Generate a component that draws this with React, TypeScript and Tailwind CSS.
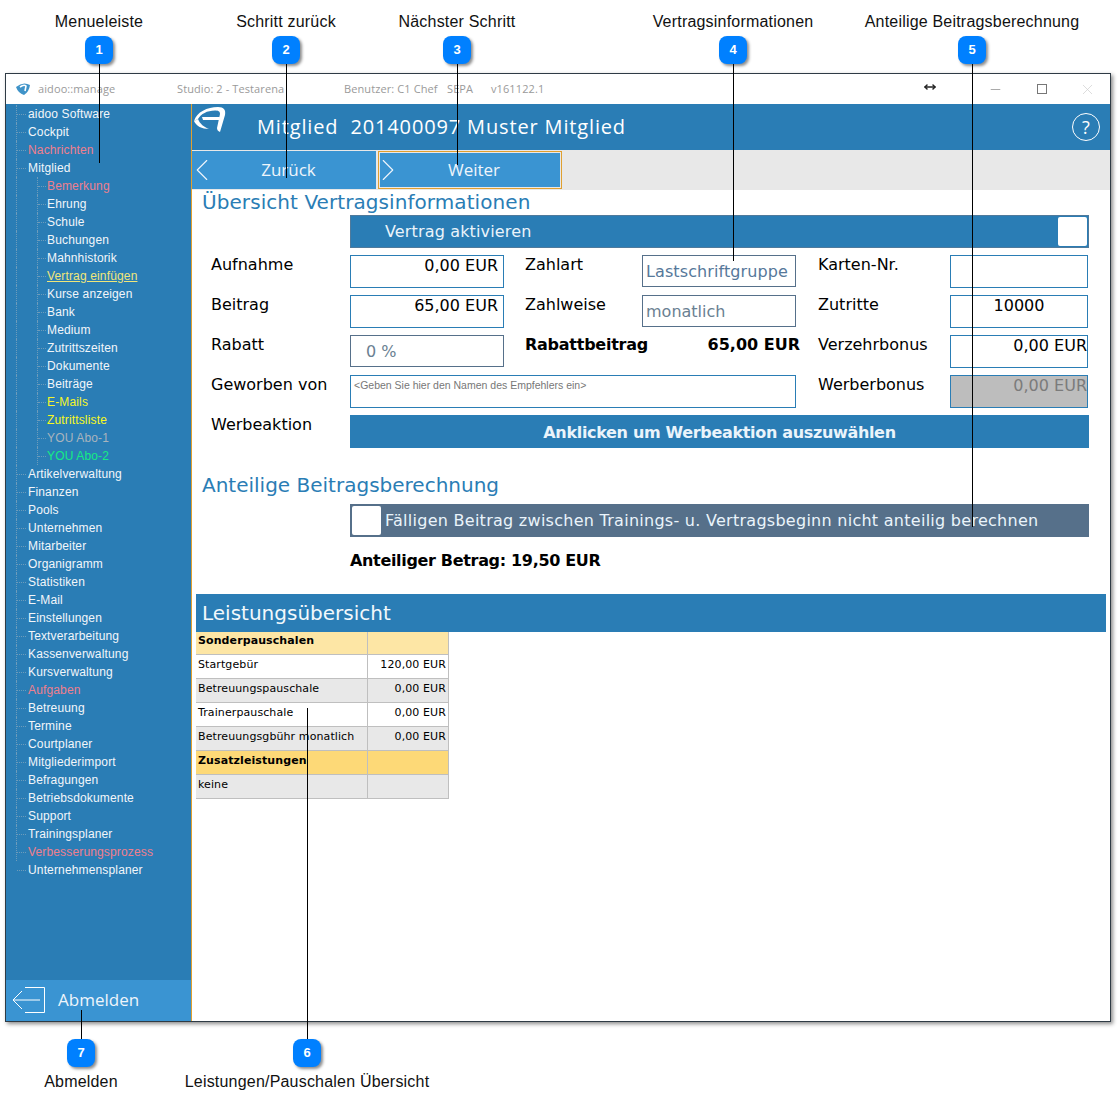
import React from 'react';
import { ChevronLeft, ChevronRight, Minus, X, MoveHorizontal } from 'lucide-react';
import { twMerge } from 'tailwind-merge';

const navItems: { label: string; sub?: boolean; color?: string; underline?: boolean }[] = [
  { label: 'aidoo Software' },
  { label: 'Cockpit' },
  { label: 'Nachrichten', color: 'text-[#ee7f8e]' },
  { label: 'Mitglied' },
  { label: 'Bemerkung', sub: true, color: 'text-[#ee7f8e]' },
  { label: 'Ehrung', sub: true },
  { label: 'Schule', sub: true },
  { label: 'Buchungen', sub: true },
  { label: 'Mahnhistorik', sub: true },
  { label: 'Vertrag einfügen', sub: true, color: 'text-[#f0e67a]', underline: true },
  { label: 'Kurse anzeigen', sub: true },
  { label: 'Bank', sub: true },
  { label: 'Medium', sub: true },
  { label: 'Zutrittszeiten', sub: true },
  { label: 'Dokumente', sub: true },
  { label: 'Beiträge', sub: true },
  { label: 'E-Mails', sub: true, color: 'text-[#f5f52a]' },
  { label: 'Zutrittsliste', sub: true, color: 'text-[#f8f820]' },
  { label: 'YOU Abo-1', sub: true, color: 'text-[#a9b4bd]' },
  { label: 'YOU Abo-2', sub: true, color: 'text-[#14ec84]' },
  { label: 'Artikelverwaltung' },
  { label: 'Finanzen' },
  { label: 'Pools' },
  { label: 'Unternehmen' },
  { label: 'Mitarbeiter' },
  { label: 'Organigramm' },
  { label: 'Statistiken' },
  { label: 'E-Mail' },
  { label: 'Einstellungen' },
  { label: 'Textverarbeitung' },
  { label: 'Kassenverwaltung' },
  { label: 'Kursverwaltung' },
  { label: 'Aufgaben', color: 'text-[#ee7f8e]' },
  { label: 'Betreuung' },
  { label: 'Termine' },
  { label: 'Courtplaner' },
  { label: 'Mitgliederimport' },
  { label: 'Befragungen' },
  { label: 'Betriebsdokumente' },
  { label: 'Support' },
  { label: 'Trainingsplaner' },
  { label: 'Verbesserungsprozess', color: 'text-[#ee7f8e]' },
  { label: 'Unternehmensplaner' },
];

// annotation callouts that sit over the screenshot
const callouts = [
  { n: 1, x: 99, label: 'Menueleiste', lineH: 99 },
  { n: 2, x: 286, label: 'Schritt zurück', lineH: 114 },
  { n: 3, x: 457, label: 'Nächster Schritt', lineH: 101 },
  { n: 4, x: 733, label: 'Vertragsinformationen', lineH: 197 },
  { n: 5, x: 972, label: 'Anteilige Beitragsberechnung', lineH: 463 },
];

const rows = [
  { label: 'Sonderpauschalen', value: '', kind: 'head1' },
  { label: 'Startgebür', value: '120,00 EUR', kind: 'white' },
  { label: 'Betreuungspauschale', value: '0,00 EUR', kind: 'gray' },
  { label: 'Trainerpauschale', value: '0,00 EUR', kind: 'white' },
  { label: 'Betreuungsgbühr monatlich', value: '0,00 EUR', kind: 'gray' },
  { label: 'Zusatzleistungen', value: '', kind: 'head2' },
  { label: 'keine', value: '', kind: 'gray' },
];

function Badge({ n }: { n: number }) {
  return (
    <div className="flex h-[28px] w-[28px] items-center justify-center rounded-[8px] bg-[#0080ff] text-[13px] font-bold text-white shadow-[2px_2px_3px_rgba(0,0,0,0.45)]">
      {n}
    </div>
  );
}

function Field({ children, className = '' }: { children?: React.ReactNode; className?: string }) {
  return (
    <div className={twMerge('h-[33px] border border-[#2a7db5] px-[5px] text-[16px] leading-[20px] text-black', className)}>
      {children}
    </div>
  );
}

function Label({ children, className = '' }: { children: React.ReactNode; className?: string }) {
  return <div className={twMerge('pt-px text-[16px] leading-[18px] text-black', className)}>{children}</div>;
}

export default function App() {
  return (
    <div className="relative h-[1107px] w-[1120px] overflow-hidden bg-white pl-[5px] pt-[73px] font-['DejaVu_Sans',sans-serif]">
      <div className="flex h-[949px] w-[1106px] flex-col border border-[#2f3b45] bg-white shadow-[2px_2px_4px_rgba(0,0,0,0.45)]">
        {/* Title bar */}
        <div className="flex h-[30px] shrink-0 items-center text-[11px] tracking-[0.1px] text-[#9a9a9a] font-['Open_Sans',sans-serif]">
          <svg width="16" height="14" viewBox="0 0 16 14" className="ml-[9px]">
            <path d="M1 5 Q8 -1 15 3 Q14 10 9 13 Q3 11 1 5Z" fill="#3f93c8" />
            <path d="M5 5 Q9 2 11 4 L10 9" fill="none" stroke="#fff" strokeWidth="1.6" />
          </svg>
          <span className="ml-[7px] w-[139px]">aidoo::manage</span>
          <span className="w-[167px]">Studio: 2 - Testarena</span>
          <span className="w-[103px]">Benutzer: C1 Chef</span>
          <span className="w-[44px]">SEPA</span>
          <span>v161122.1</span>
          <div className="ml-auto flex items-center">
            <MoveHorizontal size={12} strokeWidth={3} className="mb-[4px] mr-[52px] text-[#222]" />
            <Minus size={15} strokeWidth={1} className="mr-[34px] text-[#777]" />
            <div className="mr-[32px] h-[10px] w-[10px] border border-[#777]" />
            <X size={17} strokeWidth={1} className="mr-[14px] text-[#cfcfcf]" />
          </div>
        </div>

        <div className="flex min-h-0 flex-1">
          {/* Sidebar */}
          <div className="flex w-[186px] shrink-0 flex-col justify-between border-r border-[#e0a030] bg-[#2a7db5] font-['Liberation_Sans',sans-serif]">
            <div className="pt-px">
              {navItems.map((item, i) => (
                <div key={item.label} className="flex h-[18px] items-stretch pl-[10px] text-[12px] tracking-[0.15px]">
                  <span className={`flex w-[12px] items-center border-l border-dotted ${i < navItems.length - 1 ? 'border-[#6d9cbb]' : 'border-transparent'} ${item.sub ? 'w-[21px]' : ''}`}>
                    {!item.sub && <span className="h-px w-[9px] border-t border-dotted border-[#6d9cbb]" />}
                  </span>
                  {item.sub && (
                    <span className="flex w-[10px] items-center border-l border-dotted border-[#6d9cbb]">
                      <span className="h-px w-[8px] border-t border-dotted border-[#6d9cbb]" />
                    </span>
                  )}
                  <span className={`self-center ${item.color ?? 'text-[#f2f6fa]'} ${item.underline ? 'underline' : ''}`}>{item.label}</span>
                </div>
              ))}
            </div>
            <div className="flex h-[41px] items-center bg-[#3a94d2] pb-[2px] font-['Open_Sans',sans-serif]">
              <svg width="34" height="28" viewBox="0 0 34 28" className="ml-[6px]" fill="none" stroke="#fff" strokeWidth="1">
                <path d="M13 1.500H32.500V26.500H13" />
                <path d="M28 14H1M10 5L1 14L10 23" />
              </svg>
              <span className="ml-[12px] text-[17px] text-[#eef5fb]">Abmelden</span>
            </div>
          </div>

          {/* Main */}
          <div className="flex min-w-0 flex-1 flex-col">
            <div className="flex h-[46px] shrink-0 items-center bg-[#2a7db5] font-['Open_Sans',sans-serif] text-white">
              <svg width="33" height="27" viewBox="0 0 33 27" className="mb-[16px] ml-[1px]" fill="#fff">
                <path d="M1 15 C4 6 14 1 25 1 C31 1 33 4 32 9 L27 26 C25 25 24 24 24 22 L27 8 C27 5 25 4.500 22 4.500 C14 4.500 8 8 5 13 Z" />
                <path d="M9 11 H27 L26 14 H10 Z" />
                <path d="M1 15 L5 13 C7 18 11 21 16 23 C9 23 3 20 1 15 Z" />
              </svg>
              <span className="ml-[31px] text-[20px] tracking-[0.85px] whitespace-pre">Mitglied  201400097 Muster Mitglied</span>
              <div className="ml-auto mr-[10px] flex h-[28px] w-[28px] items-center justify-center rounded-full border border-white text-[18px]">?</div>
            </div>

            <div className="flex h-[40px] shrink-0 items-stretch gap-[2px] border-t border-[#e8e8e8] bg-[#e8e8e8] pb-px font-['Open_Sans',sans-serif] text-[#eef5fb]">
              <div className="relative flex w-[184px] items-center justify-center bg-[#3a94d2] text-[17px]">
                <ChevronLeft size={38} strokeWidth={0.7} className="absolute left-[-9px]" />
                <span className="ml-[9px]">Zurück</span>
              </div>
              <div className="relative flex w-[184px] items-center justify-center border border-[#e0a030] bg-[#3a94d2] text-[17px] outline outline-1 -outline-offset-2 outline-[#e8e8e8]">
                <ChevronRight size={38} strokeWidth={0.7} className="absolute left-[-10px]" />
                <span className="ml-[8px]">Weiter</span>
              </div>
            </div>

            <div className="flex-1 pl-[4px]">
              <div className="pl-[6px] text-[20px] leading-[24px] tracking-[0.07px] text-[#2a7db5]">Übersicht Vertragsinformationen</div>

              <div className="mt-[1px] flex flex-col pl-[15px]">
                <div className="ml-[139px] flex h-[33px] w-[739px] items-center justify-between border border-[#4f7a9c] bg-[#2a7db5] pl-[34px] pr-[1px] text-[16px] tracking-[0.15px] text-[#eaf4fb]">
                  Vertrag aktivieren
                  <div className="h-[29px] w-[29px] rounded-[2px] bg-white" />
                </div>

                <div className="mt-[7px] flex flex-col gap-[7px]">
                  <div className="grid h-[33px] grid-cols-[139px_154px_21px_117px_154px_22px_132px_138px]">
                    <Label>Aufnahme</Label>
                    <Field className="text-right">0,00 EUR</Field>
                    <span />
                    <Label>Zahlart</Label>
                    <Field className="h-[32px] border-[#56708a] px-[3px] leading-[31px] tracking-[0.1px] text-[#56789a]">Lastschriftgruppe</Field>
                    <span />
                    <Label>Karten-Nr.</Label>
                    <Field />
                  </div>
                  <div className="grid h-[33px] grid-cols-[139px_154px_21px_117px_154px_22px_132px_138px]">
                    <Label>Beitrag</Label>
                    <Field className="text-right">65,00 EUR</Field>
                    <span />
                    <Label>Zahlweise</Label>
                    <Field className="h-[32px] border-[#56708a] px-[3px] leading-[31px] text-[#6a7f92]">monatlich</Field>
                    <span />
                    <Label>Zutritte</Label>
                    <Field className="text-center">10000</Field>
                  </div>
                  <div className="grid h-[33px] grid-cols-[139px_154px_21px_117px_154px_22px_132px_138px]">
                    <Label>Rabatt</Label>
                    <Field className="h-[32px] border-[#56708a] pl-[15px] leading-[31px] text-[#6a7f92]">0 %</Field>
                    <span />
                    <Label className="font-bold tracking-[-0.25px]">Rabattbeitrag</Label>
                    <div className="-mr-[4px] pt-px text-right text-[16px] leading-[18px] font-bold text-black">65,00 EUR</div>
                    <span />
                    <Label>Verzehrbonus</Label>
                    <Field className="pr-0 text-right">0,00 EUR</Field>
                  </div>
                  <div className="grid h-[33px] grid-cols-[139px_446px_22px_132px_138px]">
                    <Label>Geworben von</Label>
                    <Field className="px-[3px] font-['Liberation_Sans',sans-serif] text-[10.5px] leading-[19px] text-[#777]">&lt;Geben Sie hier den Namen des Empfehlers ein&gt;</Field>
                    <span />
                    <Label>Werberbonus</Label>
                    <Field className="bg-[#bdbdbd] pr-0 text-right text-[#7b7b7b]">0,00 EUR</Field>
                  </div>
                  <div className="grid h-[33px] grid-cols-[139px_739px]">
                    <Label>Werbeaktion</Label>
                    <div className="flex items-center justify-center bg-[#2a7db5] pt-[2px] text-[16px] font-bold tracking-[-0.33px] text-[#eaf4fb]">Anklicken um Werbeaktion auszuwählen</div>
                  </div>
                </div>
              </div>

              <div className="mt-[25px] pl-[6px] text-[20px] leading-[24px] text-[#2a7db5]">Anteilige Beitragsberechnung</div>
              <div className="ml-[154px] mt-[7px] flex h-[33px] w-[739px] items-center bg-[#56708a] pl-[2px] text-[16px] tracking-[0.27px] text-[#eaf4fb]">
                <div className="mr-[4px] h-[29px] w-[29px] rounded-[2px] bg-white" />
                Fälligen Beitrag zwischen Trainings- u. Vertragsbeginn nicht anteilig berechnen
              </div>
              <div className="ml-[154px] mt-[14px] text-[16px] leading-[20px] font-bold tracking-[-0.33px] text-black">Anteiliger Betrag: 19,50 EUR</div>

              <div className="mt-[23px] flex h-[38px] w-[910px] items-center bg-[#2a7db5] pl-[6px] text-[20px] text-[#f2f8fc]">Leistungsübersicht</div>
              <table className="w-[253px] table-fixed border-collapse text-[11px] tracking-[0.1px] text-black">
                <colgroup>
                  <col className="w-[171px]" />
                  <col className="w-[81px]" />
                </colgroup>
                <tbody>
                  {rows.map((r) => {
                    const bg =
                      r.kind === 'head1' ? 'bg-[#fde6a5]' : r.kind === 'head2' ? 'bg-[#fdd977]' : r.kind === 'gray' ? 'bg-[#e8e8e8]' : 'bg-white';
                    const head = r.kind === 'head1' || r.kind === 'head2';
                    const first = r.kind === 'head1';
                    return (
                      <tr key={r.label} className={`${first ? 'h-[22px]' : 'h-[24px]'} ${bg}`}>
                        <td className={`border border-l-0 border-t-0 border-[#bfbfbf] pl-[2px] align-middle ${first ? 'pb-[3px]' : 'pb-[1px]'} ${head ? 'font-bold' : ''}`}>{r.label}</td>
                        <td className="border border-t-0 border-[#bfbfbf] pb-[1px] pr-[2px] text-right align-middle">{r.value}</td>
                      </tr>
                    );
                  })}
                </tbody>
              </table>
            </div>
          </div>
        </div>
      </div>

      {/* Callouts */}
      {callouts.map((c) => (
        <div key={c.n} className="absolute top-[13px] flex w-[300px] -translate-x-1/2 flex-col items-center font-['Liberation_Sans',sans-serif]" style={{ left: c.x }}>
          <div className="h-[18px] text-[16px] leading-[18px] tracking-[0.2px] whitespace-nowrap text-[#111]">{c.label}</div>
          <div className="mt-[5px]"><Badge n={c.n} /></div>
          <div className="w-px bg-black" style={{ height: c.lineH }} />
        </div>
      ))}
      {[
        { n: 7, x: 81, label: 'Abmelden', lineH: 29 },
        { n: 6, x: 307, label: 'Leistungen/Pauschalen Übersicht', lineH: 331 },
      ].map((c) => (
        <div key={c.n} className="absolute bottom-[16px] flex w-[300px] -translate-x-1/2 flex-col items-center font-['Liberation_Sans',sans-serif]" style={{ left: c.x }}>
          <div className="w-px bg-black" style={{ height: c.lineH }} />
          <Badge n={c.n} />
          <div className="mt-[6px] h-[18px] text-[16px] leading-[18px] tracking-[0.2px] whitespace-nowrap text-[#111]">{c.label}</div>
        </div>
      ))}
    </div>
  );
}
